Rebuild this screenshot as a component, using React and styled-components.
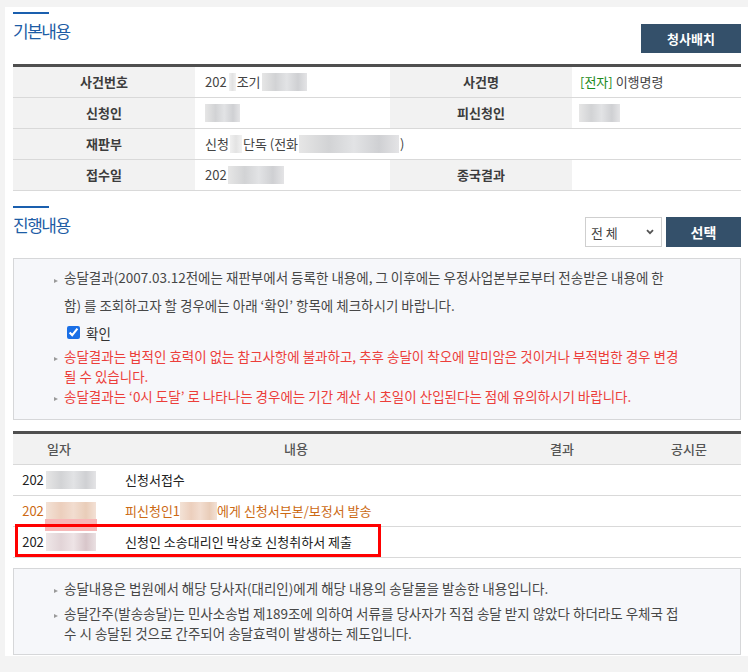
import React from 'react';
import styled, { createGlobalStyle } from 'styled-components';

const Global = createGlobalStyle`
  html, body { margin: 0; padding: 0; background: #f3f3f3; }
  body {
    font-family: "Noto Sans CJK KR", "Noto Sans", sans-serif;
    font-size: 13px;
    color: #444;
  }
  * { box-sizing: border-box; }
`;

const Panel = styled.div`
  margin: 7px 0 0 5px;
  background: #fff;
  padding: 0 7px 1px 8px;
`;

const Head = styled.div`
  display: flex;
  justify-content: space-between;
  align-items: flex-end;
  padding-top: ${p => p.$top || 0}px;
  margin-top: ${p => p.$mt || 0}px;
  margin-bottom: 11px;
`;

const Title = styled.h2`
  margin: 0;
  padding-bottom: 11px;
  font-size: 17px;
  font-weight: 400;
  letter-spacing: -1.5px;
  line-height: 22px;
  color: #1d5ca5;
  &::before {
    content: '';
    display: block;
    width: 36px;
    height: 2px;
    background: #1a5fae;
    margin-bottom: 6px;
  }
`;

const DarkButton = styled.button`
  height: ${p => p.$h}px;
  width: ${p => p.$w}px;
  border: 0;
  background: #34506a;
  color: #fff;
  font-family: inherit;
  font-weight: 700;
  font-size: ${p => p.$fs || 13}px;
  line-height: 1;
  padding: 0;
`;

const Controls = styled.div`
  display: flex;
  gap: 4px;
`;

const SelectWrap = styled.div`
  position: relative;
  width: 77px;
  height: 30px;
`;

const Select = styled.select`
  appearance: none;
  width: 100%;
  height: 100%;
  border: 1px solid #cfcfcf;
  background: #fff;
  color: #444;
  font-family: inherit;
  font-size: 13px;
  padding: 0 0 0 5px;
  border-radius: 0;
  outline: none;
`;

const Chevron = styled.svg`
  position: absolute;
  right: 8px;
  top: 12px;
  pointer-events: none;
`;

const Table = styled.table`
  width: 100%;
  table-layout: fixed;
  border-collapse: separate;
  border-spacing: 0;
  border-top: 3px solid #4f4f4f;
`;

const Th = styled.th`
  height: 31px;
  padding: 0;
  background: #f2f2f2;
  border-bottom: 1px solid #d9d9d9;
  text-align: center;
  font-weight: ${p => (p.$light ? 500 : 700)};
  color: ${p => (p.$light ? '#555' : '#3c3c3c')};
  font-size: 13px;
  line-height: 20px;
`;

const Td = styled.td`
  height: 31px;
  padding: 0 0 0 ${p => p.$pl ?? 10}px;
  border-bottom: 1px solid #d9d9d9;
  text-align: ${p => p.$align || 'left'};
  color: ${p => p.$color || '#444'};
  font-size: 13px;
  line-height: 20px;
  white-space: nowrap;
`;

const Green = styled.span`
  color: #1c8a1c;
`;

const Blur = styled.span`
  display: inline-block;
  position: relative;
  vertical-align: middle;
  width: ${p => p.$w}px;
  height: ${p => p.$h || 18}px;
  margin: -2px ${p => p.$mr || 0}px 0 ${p => p.$ml || 0}px;
  filter: blur(0.6px);
  background: ${p =>
    p.$tone === 'beige'
      ? 'linear-gradient(90deg,#f3e2d6,#eccfbd 30%,#f2ddd0 55%,#e9cdb9 80%,#f3e1d6)'
      : p.$tone === 'pink'
      ? 'linear-gradient(90deg,#efe7e8,#e2d4d7 30%,#eee4e6 55%,#d8c6ca 80%,#eae0e2)'
      : p.$tone === 'light'
      ? 'linear-gradient(90deg,#f0f0f0,#e3e3e3 50%,#f1f1f1)'
      : 'linear-gradient(90deg,#e6e6e6,#d2d3d5 30%,#e2e3e5 55%,#cfd0d3 80%,#e4e4e6)'};
  &::after {
    content: '';
    display: ${p => (p.$smear ? 'block' : 'none')};
    position: absolute;
    left: -1px;
    right: -1px;
    top: 17px;
    height: 12px;
    background: #f7b7b7;
  }
`;

const Notice = styled.div`
  background: #f6f7fa;
  border: 1px solid #d6d7d9;
  padding: ${p => p.$pad};
  margin-top: ${p => p.$mt || 0}px;
  display: flex;
  flex-direction: column;
  gap: ${p => p.$gap || 0}px;
`;

const Item = styled.div`
  display: flex;
  line-height: ${p => p.$lh || 20}px;
  color: ${p => (p.$red ? '#ec3e3a' : '#474747')};
  font-size: 13.5px;
  white-space: nowrap;
`;

const Marker = styled.span`
  flex: none;
  width: 10px;
  &::before {
    content: '';
    display: block;
    margin-top: ${p => p.$mt || 11}px;
    width: 0;
    height: 0;
    border-left: 4px solid #9a9a9a;
    border-top: 2.5px solid transparent;
    border-bottom: 2.5px solid transparent;
  }
`;

const CheckRow = styled.label`
  display: flex;
  align-items: center;
  height: 27px;
  padding-left: 10px;
  color: #333;
  font-size: 13.5px;
`;

const Check = styled.input`
  width: 13px;
  height: 13px;
  margin: 0 6px 0 3px;
  accent-color: #1a6fe6;
`;

const Framed = styled.div`
  position: relative;
  margin-top: 11px;
`;

const Highlight = styled.div`
  position: absolute;
  left: 2px;
  top: 93px;
  width: 366px;
  height: 33px;
  border: 3px solid #ff0000;
  pointer-events: none;
`;

export default function App() {
  return (
    <>
      <Global />
      <Panel>
        <Head $top={5}>
          <Title>기본내용</Title>
          <DarkButton $w={100} $h={29}>청사배치</DarkButton>
        </Head>

        <Table>
          <colgroup>
            <col style={{ width: 182 }} />
            <col style={{ width: 195 }} />
            <col style={{ width: 182 }} />
            <col style={{ width: 169 }} />
          </colgroup>
          <tbody>
            <tr>
              <Th>사건번호</Th>
              <Td>
                202<Blur $w={7} $ml={2} $mr={1} $tone="light" />조기<Blur $w={45} $ml={1} />
              </Td>
              <Th>사건명</Th>
              <Td $pl={8}>
                <Green>[전자]</Green> 이행명령
              </Td>
            </tr>
            <tr>
              <Th>신청인</Th>
              <Td>
                <Blur $w={35} />
              </Td>
              <Th>피신청인</Th>
              <Td $pl={7}>
                <Blur $w={41} />
              </Td>
            </tr>
            <tr>
              <Th>재판부</Th>
              <Td colSpan={3}>
                신청<Blur $w={12} $ml={1} $mr={1} $tone="light" />단독 (전화<Blur $w={100} $ml={1} $mr={1} />)
              </Td>
            </tr>
            <tr>
              <Th>접수일</Th>
              <Td>
                202<Blur $w={56} $ml={1} />
              </Td>
              <Th>종국결과</Th>
              <Td />
            </tr>
          </tbody>
        </Table>

        <Head $mt={15}>
          <Title>진행내용</Title>
          <Controls>
            <SelectWrap>
              <Select defaultValue="all">
                <option value="all">전 체</option>
              </Select>
              <Chevron width="8" height="6" viewBox="0 0 8 6">
                <path d="M1 1.2 L4 4.2 L7 1.2" fill="none" stroke="#555" strokeWidth="1.8" />
              </Chevron>
            </SelectWrap>
            <DarkButton $w={75} $h={30} $fs={14}>선택</DarkButton>
          </Controls>
        </Head>

        <Notice $pad="4px 20px 13px 40px">
          <Item $lh={28}>
            <Marker $mt={16} />
            <span>
              송달결과(2007.03.12전에는 재판부에서 등록한 내용에, 그 이후에는 우정사업본부로부터 전송받은 내용에 한
              <br />
              함) 를 조회하고자 할 경우에는 아래 ‘확인’ 항목에 체크하시기 바랍니다.
            </span>
          </Item>
          <CheckRow>
            <Check type="checkbox" defaultChecked />
            확인
          </CheckRow>
          <Item $red>
            <Marker />
            <span>
              송달결과는 법적인 효력이 없는 참고사항에 불과하고, 추후 송달이 착오에 말미암은 것이거나 부적법한 경우 변경
              <br />
              될 수 있습니다.
            </span>
          </Item>
          <Item $red>
            <Marker />
            <span>송달결과는 ‘0시 도달’ 로 나타나는 경우에는 기간 계산 시 초일이 산입된다는 점에 유의하시기 바랍니다.</span>
          </Item>
        </Notice>

        <Framed>
          <Table>
            <colgroup>
              <col style={{ width: 92 }} />
              <col style={{ width: 382 }} />
              <col style={{ width: 150 }} />
              <col style={{ width: 104 }} />
            </colgroup>
            <thead>
              <tr>
                <Th $light>일자</Th>
                <Th $light>내용</Th>
                <Th $light>결과</Th>
                <Th $light>공시문</Th>
              </tr>
            </thead>
            <tbody>
              <tr>
                <Td $pl={0} $align="center" $color="#222">
                  202<Blur $w={50} $ml={2} />
                </Td>
                <Td $pl={20} $color="#222">신청서접수</Td>
                <Td />
                <Td />
              </tr>
              <tr>
                <Td $pl={0} $align="center" $color="#cc6a14">
                  202<Blur $w={50} $ml={2} $tone="beige" $smear />
                </Td>
                <Td $pl={20} $color="#cc6a14">
                  피신청인1<Blur $w={37} $tone="beige" />에게 신청서부본/보정서 발송
                </Td>
                <Td />
                <Td />
              </tr>
              <tr>
                <Td $pl={0} $align="center" $color="#222">
                  202<Blur $w={50} $ml={2} $tone="pink" />
                </Td>
                <Td $pl={20} $color="#222">신청인 소송대리인 박상호 신청취하서 제출</Td>
                <Td />
                <Td />
              </tr>
            </tbody>
          </Table>
          <Highlight />
        </Framed>

        <Notice $pad="9px 20px 11px 40px" $mt={10} $gap={5}>
          <Item>
            <Marker />
            <span>송달내용은 법원에서 해당 당사자(대리인)에게 해당 내용의 송달물을 발송한 내용입니다.</span>
          </Item>
          <Item>
            <Marker />
            <span>
              송달간주(발송송달)는 민사소송법 제189조에 의하여 서류를 당사자가 직접 송달 받지 않았다 하더라도 우체국 접
              <br />
              수 시 송달된 것으로 간주되어 송달효력이 발생하는 제도입니다.
            </span>
          </Item>
        </Notice>
      </Panel>
    </>
  );
}
